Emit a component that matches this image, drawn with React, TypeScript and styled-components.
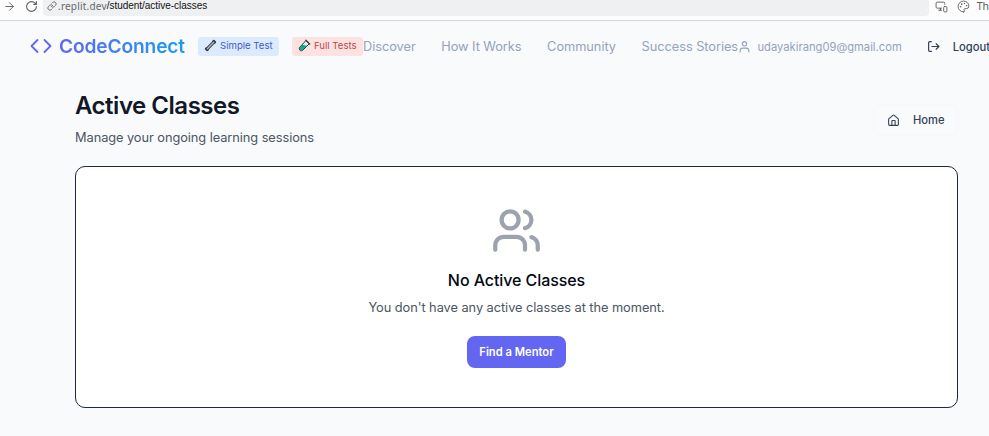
import React from "react";
import styled, { createGlobalStyle } from "styled-components";
import { ArrowRight, Link, MonitorSmartphone, Palette, RotateCw } from "lucide-react";

const GlobalStyle = createGlobalStyle`
  * { box-sizing: border-box; }
  html, body { margin: 0; background: #f9fafc; overflow: hidden; }
  body { font-family: Inter, "Liberation Sans", sans-serif; color: #0f172a; }
  h1, h2, p { margin: 0; }
  svg { flex: none; display: block; }
`;

const Page = styled.div`
  width: 989px;
  height: 436px;
  overflow: hidden;
  display: flex;
  flex-direction: column;
`;

const BrowserBar = styled.div`
  height: 21px;
  flex: none;
  display: flex;
  align-items: flex-start;
  background: #fdfdfd;
  border-bottom: 1px solid #d3d3d3;
  color: #5b5e62;
  white-space: nowrap;
`;

const BarIcon = styled.span<{ $left: number; $top?: number }>`
  margin-left: ${(p) => p.$left}px;
  margin-top: ${(p) => p.$top ?? 0}px;
`;

const AddressField = styled.div`
  width: 887px;
  height: 16px;
  margin-left: 5px;
  padding-left: 4px;
  display: flex;
  background: #eff0f2;
  border-radius: 0 0 4px 4px;
`;

const Url = styled.div`
  display: flex;
  margin-left: 1px;
  font: 10px/13px "Noto Sans", "Open Sans", sans-serif;
  letter-spacing: 0.2px;
  color: #66696d;
`;

const Path = styled.span`
  font: 10px/12px "Liberation Sans", sans-serif;
  letter-spacing: -0.03px;
  color: #111;
`;

const BarLabel = styled.span`
  margin-left: 7px;
  font: 10.5px/12px "Noto Sans", sans-serif;
`;

const Header = styled.header`
  height: 51px;
  flex: none;
  display: flex;
  align-items: center;
  padding-left: 30px;
  white-space: nowrap;

  > * { flex: none; }
`;

const Brand = styled.div`
  display: flex;
  align-items: center;
  gap: 7px;
  width: 168px;
  padding-bottom: 1px;
`;

const BrandName = styled.span`
  font-size: 19.2px;
  line-height: 26px;
  font-weight: 600;
  letter-spacing: -0.16px;
  color: transparent;
  background: linear-gradient(90deg, #6366f1, #1b9cf0);
  background-clip: text;
`;

const Badge = styled.span<{ $tone: "blue" | "red" }>`
  height: 19px;
  display: flex;
  align-items: center;
  gap: 3px;
  padding: 0 0 2px 6px;
  border-radius: 3px;
  font-size: 9.6px;
  background: ${(p) => (p.$tone === "blue" ? "#dbeafe" : "#fee2e2")};
  color: ${(p) => (p.$tone === "blue" ? "#3f5cc4" : "#b84848")};
  width: ${(p) => (p.$tone === "blue" ? 81 : 71)}px;
  margin-right: ${(p) => (p.$tone === "blue" ? 13 : 0)}px;
`;

const Nav = styled.nav`
  display: flex;
  gap: 25.6px;
  width: 374.5px;
`;

const NavLink = styled.a`
  font-size: 12.8px;
  line-height: 20px;
  letter-spacing: -0.05px;
  color: #94a3b8;
`;

const Account = styled.div`
  display: flex;
  align-items: center;
  gap: 7px;
  color: #94a3b8;
  font-size: 11.2px;
`;

const GhostAction = styled.div<{ $offset?: number }>`
  display: flex;
  align-items: center;
  gap: 13px;
  margin-left: ${(p) => p.$offset ?? 0}px;
  font-size: 11.2px;
  font-weight: 500;
  color: #334155;
`;

const Main = styled.main`
  padding: 19px 31px 0 75px;
`;

const TitleRow = styled.div`
  height: 75px;
  display: flex;
  justify-content: space-between;
`;

const Title = styled.h1`
  font-size: 24px;
  line-height: 29px;
  font-weight: 600;
  letter-spacing: -0.48px;
  color: #111827;
`;

const Subtitle = styled.p`
  margin-top: 8px;
  font-size: 12.8px;
  line-height: 20px;
  letter-spacing: -0.06px;
  color: #4b5563;
`;

const HomeButton = styled.div`
  width: 85px;
  height: 32px;
  margin-top: 13px;
  padding-left: 13px;
  display: flex;
  align-items: center;
  border: 1px solid #f7f8fb;
  border-radius: 8px;
`;

const EmptyCard = styled.section`
  height: 242px;
  padding-top: 38px;
  display: flex;
  flex-direction: column;
  align-items: center;
  background: #fff;
  border: 1px solid #1e293b;
  border-radius: 10px;
`;

const EmptyTitle = styled.h2`
  margin-top: 12px;
  font-size: 16px;
  line-height: 24px;
  font-weight: 500;
  letter-spacing: -0.08px;
  color: #030712;
`;

const EmptyText = styled.p`
  margin-top: 6px;
  font-size: 12.8px;
  line-height: 20px;
  letter-spacing: -0.05px;
  color: #4b5563;
`;

const PrimaryButton = styled.button`
  width: 99px;
  height: 32px;
  margin-top: 18px;
  padding: 0;
  border: 0;
  border-radius: 8px;
  background: #6366f1;
  color: #fff;
  font: 600 11.2px/16px Inter, sans-serif;
`;

const CodeMark = () => (
  <svg width="22" height="22" viewBox="0 0 22 22" fill="none" stroke="#6366f1" strokeWidth="1.8" strokeLinecap="round" strokeLinejoin="round">
    <path d="m7.5 5-6 6 6 6M14.5 5l6 6-6 6" />
  </svg>
);

const WrenchIcon = () => (
  <svg width="13" height="13" viewBox="0 0 13 13" strokeLinecap="round" fill="none">
    <path d="m3.2 9.8 6.6-6.6" stroke="#30343b" strokeWidth="3.2" />
    <path d="M2.3 9.7 3.3 10.7M9.7 2.3l1 1" stroke="#30343b" strokeWidth="2.8" />
    <path d="m3.3 9.7 6.4-6.4" stroke="#b4b9be" strokeWidth="1.4" />
  </svg>
);

const TubeIcon = () => (
  <svg width="13" height="13" viewBox="0 0 13 13" strokeLinejoin="round" strokeLinecap="round">
    <path d="m8.2 1.8 3 3-6.4 6.4c-2 2-5-1-3-3z" fill="#d8f3f5" stroke="#28343a" />
    <path d="m4.3 5.8 4.6.9-4.4 4.2c-1.5 1.4-3.8-.7-2.4-2.4z" fill="#10aa83" />
    <path d="m7.8 1.2 4 4" stroke="#28343a" strokeWidth="1.2" />
  </svg>
);

const UserIcon = () => (
  <svg width="13" height="13" viewBox="0 0 24 24" fill="none" stroke="currentColor" strokeWidth="2" strokeLinecap="round" strokeLinejoin="round">
    <circle cx="12" cy="7" r="4" />
    <path d="M4 22v-2a5 5 0 0 1 5-5h6a5 5 0 0 1 5 5v2" />
  </svg>
);

const LogoutIcon = () => (
  <svg width="13" height="13" viewBox="0 0 24 24" fill="none" stroke="currentColor" strokeWidth="2.2" strokeLinecap="round" strokeLinejoin="round">
    <path d="M8 3H5a2 2 0 0 0-2 2v14a2 2 0 0 0 2 2h3M17 17l5-5-5-5M22 12H9" />
  </svg>
);

const HomeIcon = () => (
  <svg width="13" height="13" viewBox="0 0 24 24" fill="none" stroke="currentColor" strokeWidth="2" strokeLinecap="round" strokeLinejoin="round">
    <path d="M15 21v-8a1 1 0 0 0-1-1h-4a1 1 0 0 0-1 1v8" />
    <path d="M3 10a2 2 0 0 1 .7-1.5l7-6a2 2 0 0 1 2.6 0l7 6A2 2 0 0 1 21 10v9a2 2 0 0 1-2 2H5a2 2 0 0 1-2-2z" />
  </svg>
);

const UsersIcon = () => (
  <svg width="51" height="51" viewBox="0 0 24 24" fill="none" stroke="#9ca3af" strokeWidth="2" strokeLinecap="round" strokeLinejoin="round">
    <path d="M16 21v-2a4 4 0 0 0-4-4H6a4 4 0 0 0-4 4v2" />
    <circle cx="9" cy="7" r="4" />
    <path d="M22 21v-2a4 4 0 0 0-3-3.87M16 3.13a4 4 0 0 1 0 7.75" />
  </svg>
);

export default function App() {
  return (
    <Page>
      <GlobalStyle />
      <BrowserBar>
        <BarIcon $left={3}><ArrowRight size={13} strokeWidth={1.7} /></BarIcon>
        <BarIcon $left={9}><RotateCw size={13} strokeWidth={2} /></BarIcon>
        <AddressField>
          <BarIcon $left={0} $top={1}><Link size={10} strokeWidth={2} /></BarIcon>
          <Url>.replit.dev<Path>/student/active-classes</Path></Url>
        </AddressField>
        <BarIcon $left={6}><MonitorSmartphone size={13} strokeWidth={1.7} /></BarIcon>
        <BarIcon $left={9}><Palette size={13} strokeWidth={1.7} /></BarIcon>
        <BarLabel>Th</BarLabel>
      </BrowserBar>
      <Header>
        <Brand><CodeMark /><BrandName>CodeConnect</BrandName></Brand>
        <Badge $tone="blue"><WrenchIcon />Simple Test</Badge>
        <Badge $tone="red"><TubeIcon />Full Tests</Badge>
        <Nav>
          {["Discover", "How It Works", "Community", "Success Stories"].map((label) => (
            <NavLink key={label}>{label}</NavLink>
          ))}
        </Nav>
        <Account><UserIcon />udayakirang09@gmail.com</Account>
        <GhostAction $offset={25}><LogoutIcon />Logout</GhostAction>
      </Header>
      <Main>
        <TitleRow>
          <div>
            <Title>Active Classes</Title>
            <Subtitle>Manage your ongoing learning sessions</Subtitle>
          </div>
          <HomeButton><GhostAction><HomeIcon />Home</GhostAction></HomeButton>
        </TitleRow>
        <EmptyCard>
          <UsersIcon />
          <EmptyTitle>No Active Classes</EmptyTitle>
          <EmptyText>You don't have any active classes at the moment.</EmptyText>
          <PrimaryButton>Find a Mentor</PrimaryButton>
        </EmptyCard>
      </Main>
    </Page>
  );
}
